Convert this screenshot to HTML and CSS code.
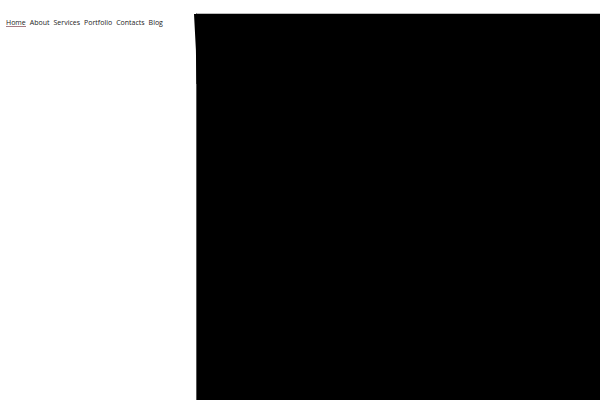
FILE: index.html
```
<!DOCTYPE html>
<html lang="en">
<head>
    <meta charset="UTF-8">
    <meta name="viewport" content="width=device-width, initial-scale=1.0">
    <title>Home</title>
    <link rel="stylesheet" href="styles.css">
</head>
<body>
    <header class="sidebar">
        <nav class="menu">
            <a class="active" href="#home">Home</a>
            <a href="#about">About</a>
            <a href="#services">Services</a>
            <a href="#portfolio">Portfolio</a>
            <a href="#contacts">Contacts</a>
            <a href="#blog">Blog</a>
        </nav>
    </header>
    <main class="hero">
        <svg class="curve" viewBox="0 0 3 70" aria-hidden="true">
            <path d="M0 0 Q2.5 36 2.5 70 H3 V0 Z"/>
        </svg>
    </main>
</body>
</html>
```
FILE: styles.css
```
body {
    display: flex;
    min-height: 100vh;
    margin: 0;
    background-color: #fff;
    color: #222;
    font-family: "Open Sans", "Noto Sans", sans-serif;
    font-size: 7px;
    line-height: 6px;
    overflow: hidden;
}
.sidebar {
    box-sizing: border-box;
    width: 33%;
    min-width: 168px;
    padding: 20px 6px;
}
.menu {
    display: flex;
    gap: 4px;
}
.menu a {
    color: inherit;
    text-decoration: none;
    border-bottom: 1px solid transparent;
}
.menu .active {
    border-bottom-color: #a57c84;
}
.hero {
    position: relative;
    flex: 1;
    margin-top: 13px;
    margin-left: -2px;
    background-color: #000;
    border-top: 1px solid #bbb;
    border-left: 1px solid #555;
}
/* flared top corner of the panel */
.curve {
    position: absolute;
    top: 0;
    left: -3px;
    width: 3px;
    height: 70px;
}
```
